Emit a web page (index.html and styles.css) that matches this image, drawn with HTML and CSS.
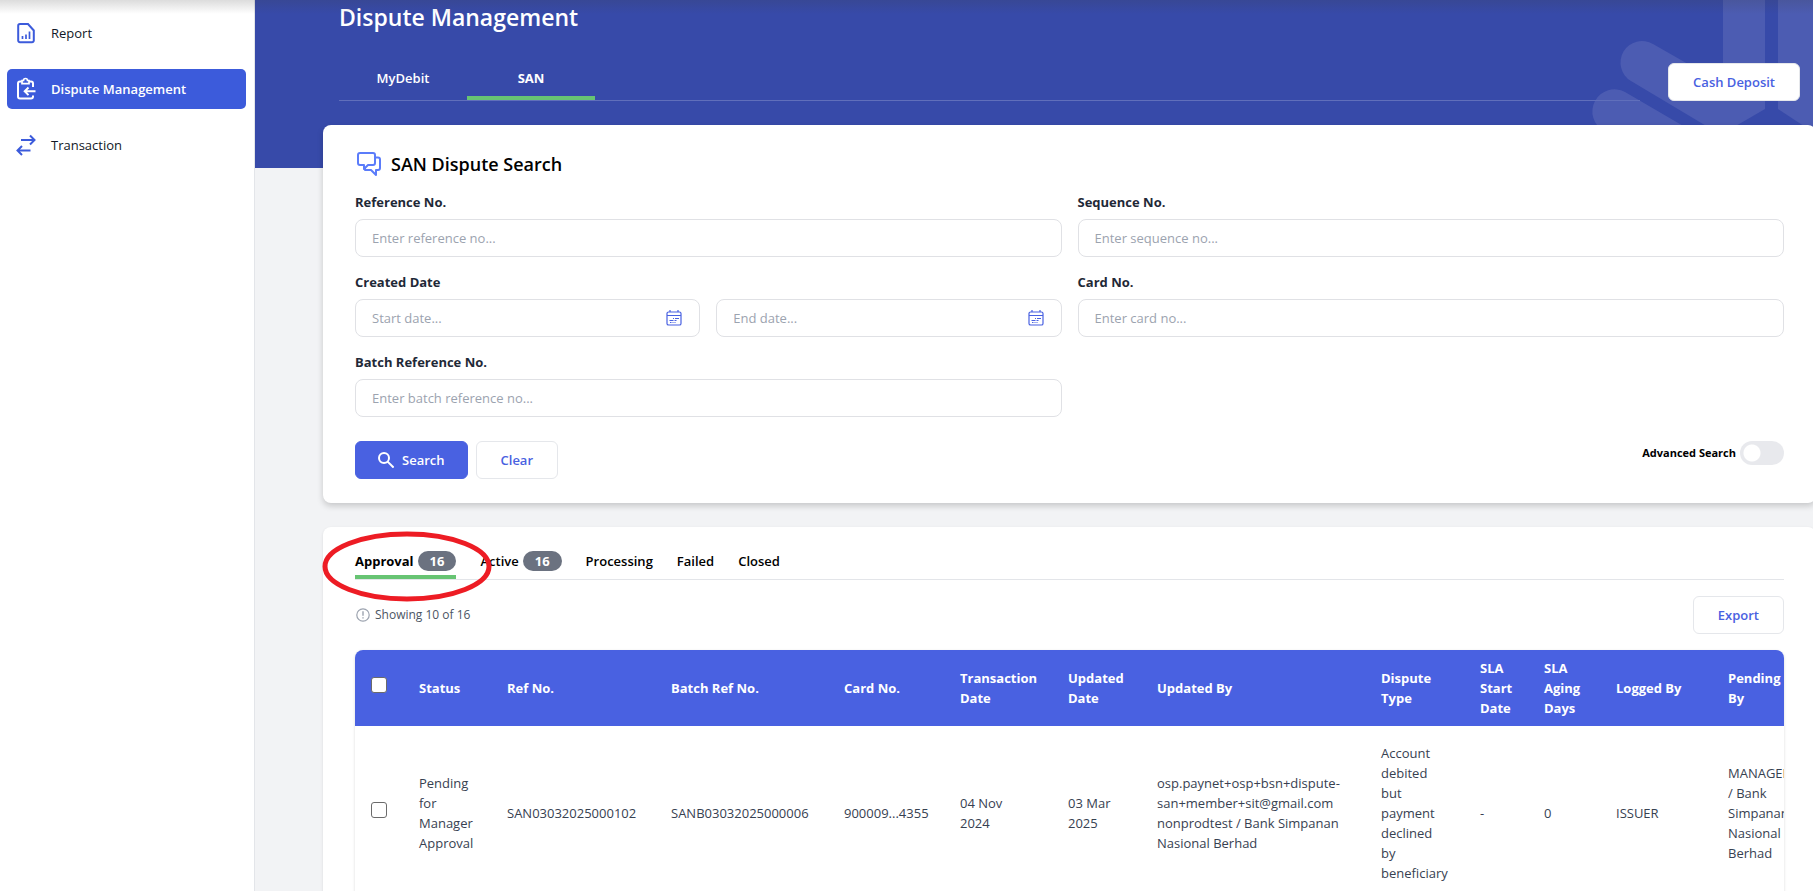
FILE: index.html
```html
<!DOCTYPE html>
<html lang="en">
<head>
<meta charset="utf-8">
<title>Dispute Management</title>
<link rel="stylesheet" href="styles.css">
</head>
<body>
<svg class="defs" aria-hidden="true">
  <symbol id="calendar" viewBox="0 0 16 16">
    <g fill="none" stroke="currentColor" stroke-width="1.2">
      <rect x="1" y="2" width="14" height="13" rx="1.6"/>
      <path d="M1 5.500h14M4 0v2M12 0v2"/>
      <path d="M7 8.500h1M9 8.500h4M3.500 10.500h4M8.500 10.500h2M4 12.500h1.500M6.500 12.500h1M8.500 12.500h1" stroke-width="1"/>
    </g>
  </symbol>
</svg>
<div class="app">
  <nav class="sidebar">
    <a class="side-link" href="#">
      <svg class="side-icon" viewBox="0 0 20 24" fill="none" stroke="currentColor" stroke-width="2"><path d="M4 3h8l5.800 6.500v10a1.800 1.800 0 0 1-1.800 1.800H4a1.800 1.800 0 0 1-1.800-1.800V4.800A1.800 1.800 0 0 1 4 3z"/><path d="M6.500 18v-3M10 18v-4.500M13.500 18v-7.500" stroke-width="1.700"/></svg>
      Report</a>
    <a class="side-link active" href="#">
      <svg class="side-icon" viewBox="0 0 20 24" fill="none" stroke="currentColor" stroke-width="2"><path d="M5.500 4.500H4A2 2 0 0 0 2 6.500v13a2 2 0 0 0 2 2h11a2 2 0 0 0 2-2v-1M13 4.500h2a2 2 0 0 1 2 2V10"/><path d="M6 3.500h1.500a2 2 0 0 1 4 0H13v3.200H6z" stroke-width="1.700"/><path d="M19.500 14.300H9M12.500 10.500l-3.800 3.800 3.800 3.800"/></svg>
      Dispute Management</a>
    <a class="side-link" href="#">
      <svg class="side-icon" viewBox="0 0 20 24" fill="none" stroke="currentColor" stroke-width="2"><path d="M5 7H18M14 2.500L18.500 7 14 11.500M14.500 17.500H2M6 13l-4.500 4.500L6 22"/></svg>
      Transaction</a>
  </nav>
  <main class="main">
    <header class="hero">
      <svg class="hero-mark" viewBox="-20 0 240 168" fill="#4c5cb2"><path d="M127 0h42v109l-31 18-26 0L35 81A21 21 0 0 1 57 44l70 40z"/><path d="M182 0h38v134l-38-25z"/><path d="M29 92l120 70v6H55L8 131a21 21 0 0 1 21-39z"/></svg>
      <div class="hero-inner">
        <h1>Dispute Management</h1>
        <div class="hero-row">
          <div class="hero-tabs">
            <button class="hero-tab">MyDebit</button>
            <button class="hero-tab current">SAN</button>
          </div>
          <button class="btn">Cash Deposit</button>
        </div>
      </div>
    </header>
    <div class="content">
      <section class="card search-card">
        <h2><svg class="chat-icon" viewBox="0 0 24 24" fill="none" stroke="currentColor" stroke-width="2" stroke-linejoin="round"><path d="M3 1h13a2 2 0 0 1 2 2v8a2 2 0 0 1-2 2h-5l-4 4v-4H3a2 2 0 0 1-2-2V3a2 2 0 0 1 2-2z"/><path d="M18 5.500h3a2 2 0 0 1 2 2v8.500a2 2 0 0 1-2 2h-2v5l-5-5H8v-2"/></svg>SAN Dispute Search</h2>
        <form class="fields">
          <div class="field"><label for="ref">Reference No.</label><input class="text" id="ref" placeholder="Enter reference no..."></div>
          <div class="field"><label for="seq">Sequence No.</label><input class="text" id="seq" placeholder="Enter sequence no..."></div>
          <div class="field"><label for="start">Created Date</label>
            <div class="dates">
              <div class="date"><input class="text" id="start" placeholder="Start date..."><svg><use href="#calendar"/></svg></div>
              <div class="date"><input class="text" id="end" aria-label="End date" placeholder="End date..."><svg><use href="#calendar"/></svg></div>
            </div>
          </div>
          <div class="field"><label for="card">Card No.</label><input class="text" id="card" placeholder="Enter card no..."></div>
          <div class="field"><label for="batch">Batch Reference No.</label><input class="text" id="batch" placeholder="Enter batch reference no..."></div>
        </form>
        <div class="actions">
          <button class="btn primary"><svg viewBox="0 0 16 16" fill="none" stroke="currentColor" stroke-width="2"><circle cx="6" cy="6" r="5"/><path d="M9.600 9.600l6 6"/></svg>Search</button>
          <button class="btn">Clear</button>
          <label class="advanced">Advanced Search <input type="checkbox" class="switch"></label>
        </div>
      </section>
      <section class="card list-card">
        <div class="tabs">
          <button class="tab current">Approval <span class="badge">16</span></button>
          <button class="tab">Active <span class="badge">16</span></button>
          <button class="tab">Processing</button>
          <button class="tab">Failed</button>
          <button class="tab">Closed</button>
        </div>
        <svg class="marker" viewBox="0 0 170 71"><ellipse cx="85" cy="35.500" rx="82" ry="32.500" fill="none" stroke="#ed1c24" stroke-width="5"/></svg>
        <div class="summary">
          <span class="showing"><svg viewBox="0 0 14 14" fill="none" stroke="currentColor"><circle cx="7" cy="7" r="6.200" stroke-width="1.200"/><path d="M7 3.300v4.500M7 9.200v1.400" stroke-width="1.400"/></svg>Showing 10 of 16</span>
          <button class="btn">Export</button>
        </div>
        <div class="table-wrap">
          <table>
            <colgroup><col class="w-check"><col class="w-status"><col class="w-ref"><col class="w-batch"><col class="w-card"><col class="w-trans"><col class="w-updated"><col class="w-by"><col class="w-type"><col class="w-sla"><col class="w-aging"><col class="w-logged"><col class="w-pending"></colgroup>
            <thead><tr>
              <th><input type="checkbox" class="tick" aria-label="Select all"></th><th>Status</th><th>Ref No.</th><th>Batch Ref No.</th><th>Card No.</th><th>Transaction Date</th><th>Updated Date</th><th>Updated By</th><th>Dispute Type</th><th>SLA Start Date</th><th>SLA Aging Days</th><th>Logged By</th><th>Pending<br>By</th>
            </tr></thead>
            <tbody><tr>
              <td><input type="checkbox" class="tick" aria-label="Select row"></td><td>Pending for Manager Approval</td><td>SAN03032025000102</td><td>SANB03032025000006</td><td>900009...4355</td><td>04 Nov<br>2024</td><td>03 Mar<br>2025</td><td>osp.paynet+osp+bsn+dispute-san+member+sit@gmail.com nonprodtest / Bank Simpanan Nasional Berhad</td><td>Account debited but payment declined by beneficiary</td><td>-</td><td>0</td><td>ISSUER</td><td>MANAGER / Bank Simpanan Nasional Berhad</td>
            </tr></tbody>
          </table>
        </div>
      </section>
    </div>
  </main>
</div>
</body>
</html>
```
FILE: styles.css
```css
* { box-sizing: border-box; }
body {
  margin: 0;
  font: 13px/20px "Open Sans", "Noto Sans", sans-serif;
  color: #111827;
  background: #f2f3f5;
}
button, input { font: inherit; margin: 0; }
button { cursor: pointer; }
h1, h2 { margin: 0; font-weight: 600; }
.defs { position: absolute; width: 0; height: 0; }

.app {
  position: relative;
  display: grid;
  grid-template-columns: 255px minmax(0, 1fr);
  height: 100vh;
  overflow: hidden;
}
.app::before {
  content: "";
  position: absolute;
  inset: 0 0 auto 0;
  height: 14px;
  background: linear-gradient(rgba(60, 60, 60, .18), rgba(60, 60, 60, 0));
  z-index: 3;
}

.sidebar {
  display: flex;
  flex-direction: column;
  gap: 16px;
  padding: 13px 8px 0 7px;
  background: #fff;
  border-right: 1px solid #e3e5e9;
}
.side-link {
  display: flex;
  align-items: center;
  gap: 15px;
  height: 40px;
  padding-left: 9px;
  border-radius: 5px;
  color: #111827;
  font-weight: 500;
  text-decoration: none;
}
.side-link.active { background: #3c5bdb; color: #fff; font-weight: 600; }
.side-icon { width: 20px; height: 24px; color: #3c5bdb; }
.active .side-icon { color: #fff; }

.main { overflow: hidden; }
.hero { position: relative; height: 168px; background: #374aa9; }
.hero-mark { position: absolute; top: 0; right: -3px; width: 240px; height: 168px; }
.hero-inner { position: relative; padding: 1px 13px 0 84px; }
h1 { font-size: 23px; line-height: 32px; color: #fff; }
.hero-row { display: flex; align-items: flex-end; gap: 28px; margin-top: 27px; }
.hero-tabs { display: flex; flex: 1; border-bottom: 1px solid #606fbb; }
.hero-tab {
  width: 128px;
  height: 40px;
  padding: 0;
  border: 0;
  border-bottom: 4px solid transparent;
  background: none;
  color: #fff;
  font-weight: 600;
}
.hero-tab.current { border-color: #67c473; font-weight: 700; }

.btn {
  display: inline-flex;
  align-items: center;
  justify-content: center;
  gap: 8px;
  height: 38px;
  padding: 0 24px;
  border: 1px solid #e5e7eb;
  border-radius: 6px;
  background: #fff;
  color: #4961e1;
  font-weight: 600;
}
.btn.primary { background: #4961e1; border-color: #4961e1; color: #fff; padding: 0 22px; }
.btn svg { width: 16px; height: 16px; }

.content {
  position: relative;
  display: flex;
  flex-direction: column;
  gap: 24px;
  margin: -43px -3px 0 68px;
}
.card { position: relative; border-radius: 8px; background: #fff; padding: 24px 32px; }
.search-card { box-shadow: 0 3px 6px rgba(0, 0, 0, .18); }
h2 {
  display: flex;
  align-items: center;
  gap: 10px;
  padding-left: 2px;
  font-size: 18px;
  line-height: 30px;
  color: #000;
}
.chat-icon { width: 24px; height: 24px; color: #5b7cfa; }
.fields {
  display: grid;
  grid-template-columns: 1fr 1fr;
  gap: 15px 16px;
  margin-top: 13px;
}
.field { display: flex; flex-direction: column; gap: 7px; }
.field label { font-weight: 700; color: #1f2937; }
.text {
  width: 100%;
  height: 38px;
  padding: 0 16px;
  border: 1px solid #e0e1e5;
  border-radius: 8px;
  background: #fff;
}
.text::placeholder { color: #9ca3af; opacity: 1; }
.dates { display: grid; grid-template-columns: 1fr 1fr; gap: 16px; }
.date { position: relative; }
.date svg { position: absolute; right: 18px; top: 11px; width: 16px; height: 16px; color: #4961e1; }
.actions { display: flex; gap: 8px; margin-top: 24px; }
.advanced {
  display: flex;
  align-items: center;
  gap: 4px;
  height: 24px;
  margin-left: auto;
  font-size: 11px;
  font-weight: 700;
  color: #000;
}
.switch {
  appearance: none;
  width: 44px;
  height: 24px;
  border-radius: 12px;
  background: radial-gradient(circle at 12px 12px, #fff 8px, #e8e9ed 9px);
}

.list-card { box-shadow: 0 1px 3px rgba(0, 0, 0, .1); }
.tabs { display: flex; gap: 24px; border-bottom: 1px solid #e3e5e9; }
.tab {
  display: flex;
  align-items: flex-start;
  gap: 4px;
  height: 28px;
  padding: 0;
  border: 0;
  border-bottom: 4px solid transparent;
  background: none;
  color: #000;
  font-weight: 600;
}
.tab.current { border-color: #67c473; font-weight: 700; }
.badge {
  padding: 0 12px;
  border-radius: 10px;
  background: #6b7280;
  color: #fff;
  font-weight: 700;
}
.marker { position: absolute; left: -1px; top: 4px; width: 170px; height: 71px; z-index: 2; }
.summary { display: flex; align-items: center; justify-content: space-between; margin: 16px 0; }
.showing { display: flex; align-items: center; gap: 5px; padding-left: 1px; font-size: 12px; color: #4b5563; }
.showing svg { width: 14px; height: 14px; color: #9ca3af; }

.table-wrap { overflow: hidden; border-radius: 8px; box-shadow: 0 1px 3px rgba(0, 0, 0, .15); }
table { width: 1457px; table-layout: fixed; border-collapse: collapse; }
th { height: 76px; padding: 8px 4px 8px 16px; background: #4961e1; color: #fff; font-weight: 700; text-align: left; }
td { padding: 17px 16px; color: #374151; }
td:first-child { padding-right: 0; }
.tick {
  appearance: none;
  display: block;
  width: 16px;
  height: 16px;
  margin-bottom: 6px;
  border: 1px solid #6b6b6b;
  border-radius: 3px;
  background: #fff;
}
.w-check { width: 48px; }
.w-status { width: 88px; }
.w-ref { width: 164px; }
.w-batch { width: 173px; }
.w-card { width: 116px; }
.w-trans { width: 108px; }
.w-updated { width: 89px; }
.w-by { width: 224px; }
.w-type { width: 99px; }
.w-sla { width: 64px; }
.w-aging { width: 72px; }
.w-logged { width: 112px; }
.w-pending { width: 100px; }
```
